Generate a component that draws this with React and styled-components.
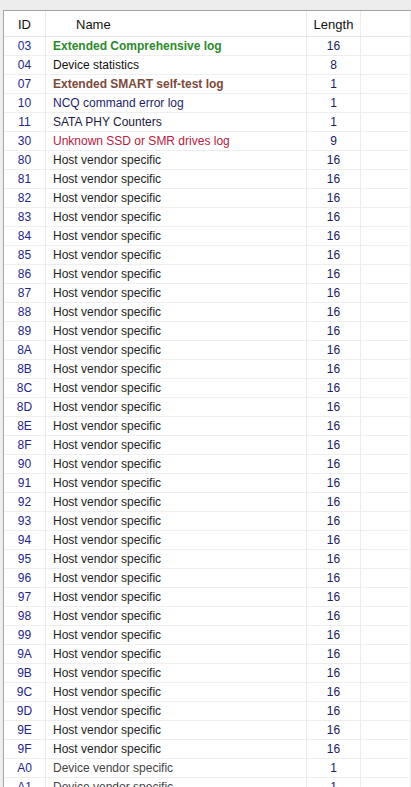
import React from 'react';
import styled, {createGlobalStyle} from 'styled-components';

const GlobalStyle = createGlobalStyle`
    body {
        margin: 0;
        background: #ffffff;
        font-family: "Liberation Sans", Arial, sans-serif;
        font-size: 12px;
    }
    * {
        box-sizing: border-box;
    }
`;

export const Window = styled.div`
    background-color: #ededed;
    padding-top: 10px;
    padding-left: 3px;
    height: 787px;
    overflow: hidden;
`;
export const Frame = styled.div`
    background-color: #ffffff;
    border-top: 1px solid #a4a4a4;
    border-left: 1px solid #a4a4a4;
    height: 100%;
`;
export const Row = styled.div`
    display: grid;
    grid-template-columns: 42px 261px 54px 1fr;
    height: ${props => props.header ? '26px' : '19px'};
    border-bottom: 1px solid ${props => props.header ? '#e4e4e4' : '#eeeeee'};
`;
export const Cell = styled.div`
    display: flex;
    align-items: center;
    justify-content: ${props => props.align || 'flex-start'};
    padding-left: ${props => props.pad || 0}px;
    border-right: 1px solid #ececec;
    color: ${props => props.color || '#24248a'};
    font-weight: ${props => props.bold ? 'bold' : 'normal'};
    white-space: nowrap;
    overflow: hidden;
`;
export const HeadCell = styled(Cell)`
    color: #111111;
    font-size: 13px;
    padding-top: 2px;
`;

const special = [
    {id: '03', name: 'Extended Comprehensive log', len: 16, color: '#2b8a2b', bold: true},
    {id: '04', name: 'Device statistics', len: 8, color: '#111111'},
    {id: '07', name: 'Extended SMART self-test log', len: 1, color: '#7b4a3b', bold: true},
    {id: '10', name: 'NCQ command error log', len: 1, color: '#1c1c6e'},
    {id: '11', name: 'SATA PHY Counters', len: 1, color: '#1a1a3c'},
    {id: '30', name: 'Unknown SSD or SMR drives log', len: 9, color: '#b8203e'},
];

const hostRows = [];
for (let i = 0x80; i <= 0x9f; i++) {
    hostRows.push({id: i.toString(16).toUpperCase(), name: 'Host vendor specific', len: 16, color: '#222222'});
}

const rows = [
    ...special,
    ...hostRows,
    {id: 'A0', name: 'Device vendor specific', len: 1, color: '#444444'},
    {id: 'A1', name: 'Device vendor specific', len: 1, color: '#444444'},
];

function App() {
    return(
        <>
            <GlobalStyle/>
            <Window>
                <Frame>
                    <Row header>
                        <HeadCell align='center'>ID</HeadCell>
                        <HeadCell pad={30}>Name</HeadCell>
                        <HeadCell align='center'>Length</HeadCell>
                        <HeadCell/>
                    </Row>
                    {rows.map(r => (
                        <Row key={r.id}>
                            <Cell align='center'>{r.id}</Cell>
                            <Cell pad={7} color={r.color} bold={r.bold}>{r.name}</Cell>
                            <Cell align='center' color='#20205e'>{r.len}</Cell>
                            <Cell/>
                        </Row>
                    ))}
                </Frame>
            </Window>
        </>
    );
}

export default App
